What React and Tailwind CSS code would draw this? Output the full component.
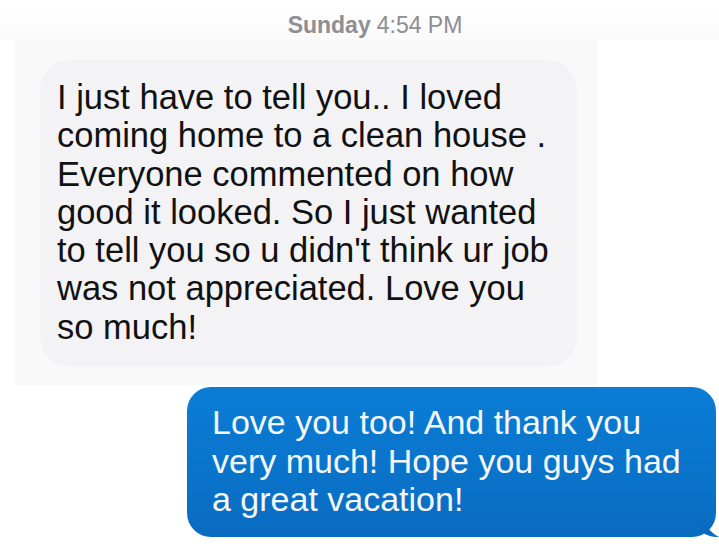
const incoming = [
  'I just have to tell you.. I loved',
  'coming home to a clean house .',
  'Everyone commented on how',
  'good it looked. So I just wanted',
  "to tell you so u didn't think ur job",
  'was not appreciated. Love you',
  'so much!',
]

const outgoing = [
  'Love you too! And thank you',
  'very much! Hope you guys had',
  'a great vacation!',
]

export default function App() {
  return (
    <div className="w-[719px] h-[554px] bg-white overflow-hidden" style={{ fontFamily: '"Liberation Sans", Arial, sans-serif' }}>
      {/* timestamp */}
      <div className="h-[40px] flex items-center justify-center pl-[31px] pt-[10px] text-[23px] text-[#8e8e93] bg-gradient-to-b from-white to-[#fafafa]">
        <span className="font-bold">Sunday</span>
        <span className="ml-[6px]">4:54 PM</span>
      </div>

      {/* incoming */}
      <div className="w-[582px] ml-[15px] pl-[25px] pt-[20px] pb-[18px] bg-[#f9f9fa]">
        <div className="w-[537px] rounded-[30px] bg-[#f3f3f6] pl-[17px] pt-[18px] pb-[21px] text-[34.5px] leading-[38.3px] text-[#111] whitespace-nowrap">
          {incoming.map((l) => (
            <div key={l}>{l}</div>
          ))}
        </div>
      </div>

      {/* outgoing */}
      <div className="flex justify-end pt-[2px] pr-[3px]">
        <div className="relative w-[529px] rounded-[24px] bg-gradient-to-b from-[#0b7dd6] to-[#096cc1] pl-[25px] pt-[16px] pb-[18px] text-[34px] leading-[38.5px] text-[#f4f8fc] whitespace-nowrap">
          {outgoing.map((l) => (
            <div key={l}>{l}</div>
          ))}
          <svg className="absolute -right-[3px] bottom-0" width="20" height="22" viewBox="0 0 20 22">
            <path d="M0 0 L6 0 C6 10 10 17 20 22 C12 22 6 20 2 16 Z" fill="#096cc1" />
          </svg>
        </div>
      </div>
    </div>
  )
}
